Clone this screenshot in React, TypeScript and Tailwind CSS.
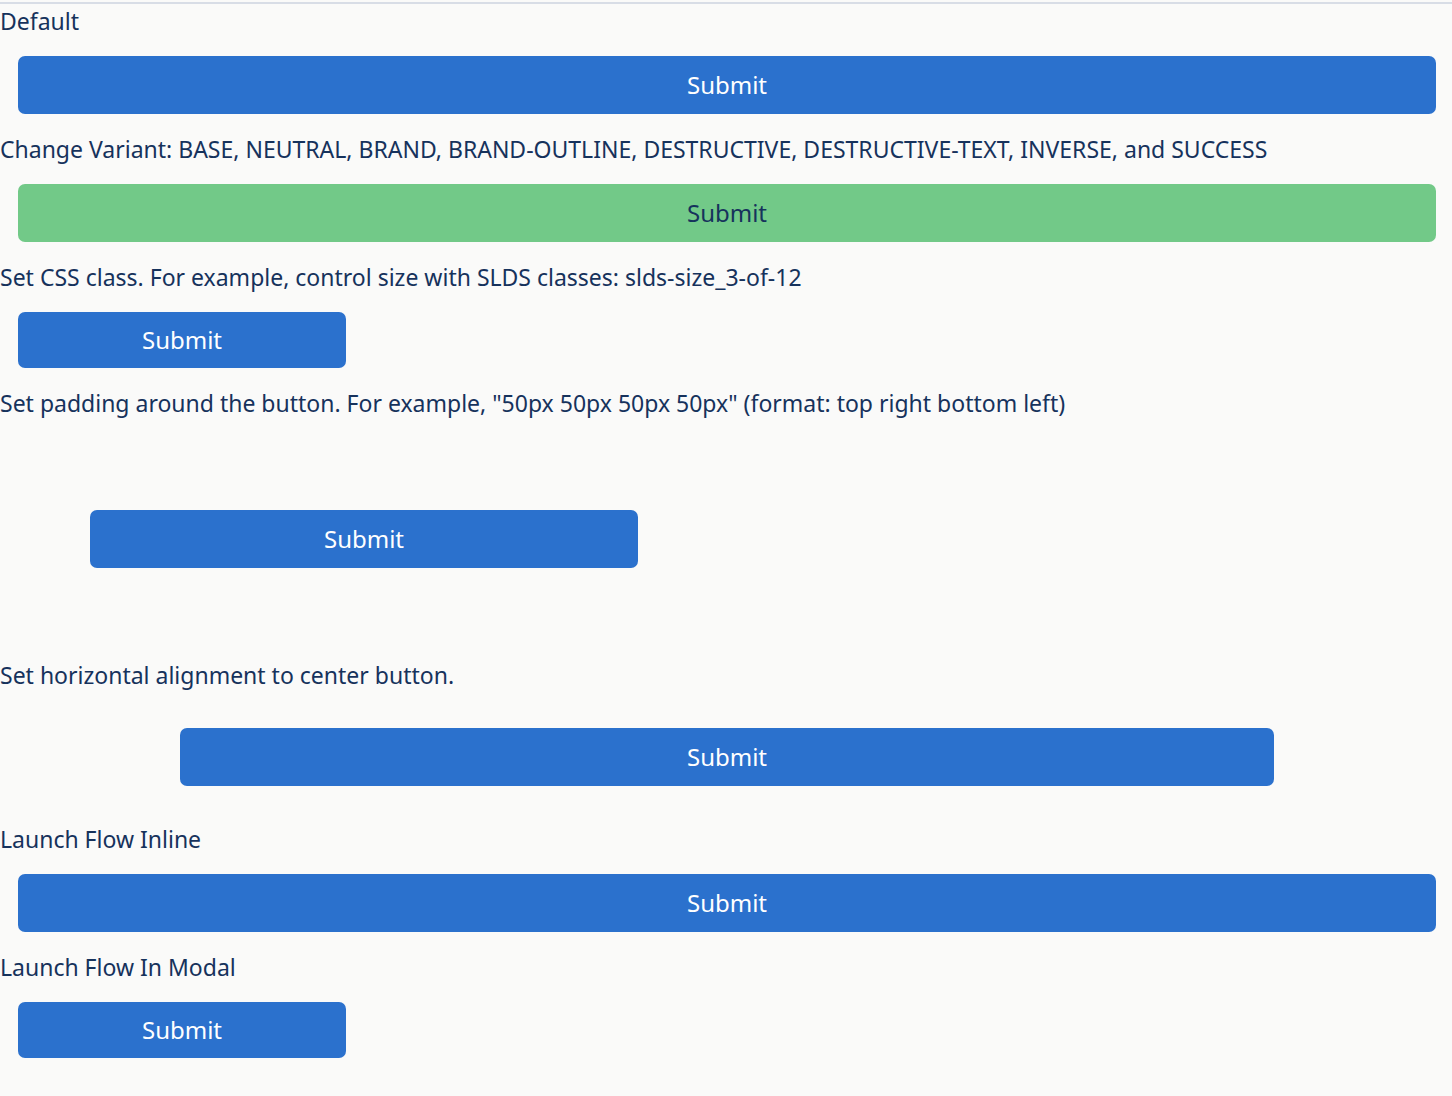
import React from "react";

type Variant = "brand" | "success";

const variants: Record<Variant, string> = {
  brand: "bg-[#2b71cd] text-white",
  success: "bg-[#72c988] text-[#16325c]",
};

function SubmitButton({ variant = "brand", size = "h-[58px]" }: { variant?: Variant; size?: string }) {
  return (
    <button type="button" className={`flex w-full items-center justify-center rounded-[7px] text-2xl ${variants[variant]} ${size}`}>
      Submit
    </button>
  );
}

interface ExampleProps {
  title: string;
  spacing?: string;
  children: React.ReactNode;
}

function Example({ title, spacing = "pt-4 pr-4 pb-[18px] pl-[18px]", children }: ExampleProps) {
  return (
    <section>
      <h2 className="leading-[35px] pb-px">{title}</h2>
      <div className={spacing}>{children}</div>
    </section>
  );
}

export default function App() {
  return (
    <div className="min-h-screen bg-[#fafaf9] pt-0.5 font-['Noto_Sans','Open_Sans',sans-serif] text-[23px] text-[#16325c]">
      <main className="border-t-2 border-[#d8dde6]">
        <Example title="Default">
          <SubmitButton />
        </Example>
        <Example title="Change Variant: BASE, NEUTRAL, BRAND, BRAND-OUTLINE, DESTRUCTIVE, DESTRUCTIVE-TEXT, INVERSE, and SUCCESS">
          <SubmitButton variant="success" />
        </Example>
        <Example
          title="Set CSS class. For example, control size with SLDS classes: slds-size_3-of-12"
          spacing="w-1/4 pt-4 pr-[17px] pb-[18px] pl-[18px]"
        >
          <SubmitButton size="h-14" />
        </Example>
        <Example
          title={'Set padding around the button. For example, "50px 50px 50px 50px" (format: top right bottom left)'}
          spacing="w-1/2 pt-[88px] pr-[88px] pb-[90px] pl-[90px]"
        >
          <SubmitButton />
        </Example>
        <Example title="Set horizontal alignment to center button." spacing="pt-[34px] pr-[178px] pb-9 pl-[180px]">
          <SubmitButton />
        </Example>
        <Example title="Launch Flow Inline">
          <SubmitButton />
        </Example>
        <Example title="Launch Flow In Modal" spacing="w-1/4 pt-4 pr-[17px] pb-[18px] pl-[18px]">
          <SubmitButton size="h-14" />
        </Example>
      </main>
    </div>
  );
}
